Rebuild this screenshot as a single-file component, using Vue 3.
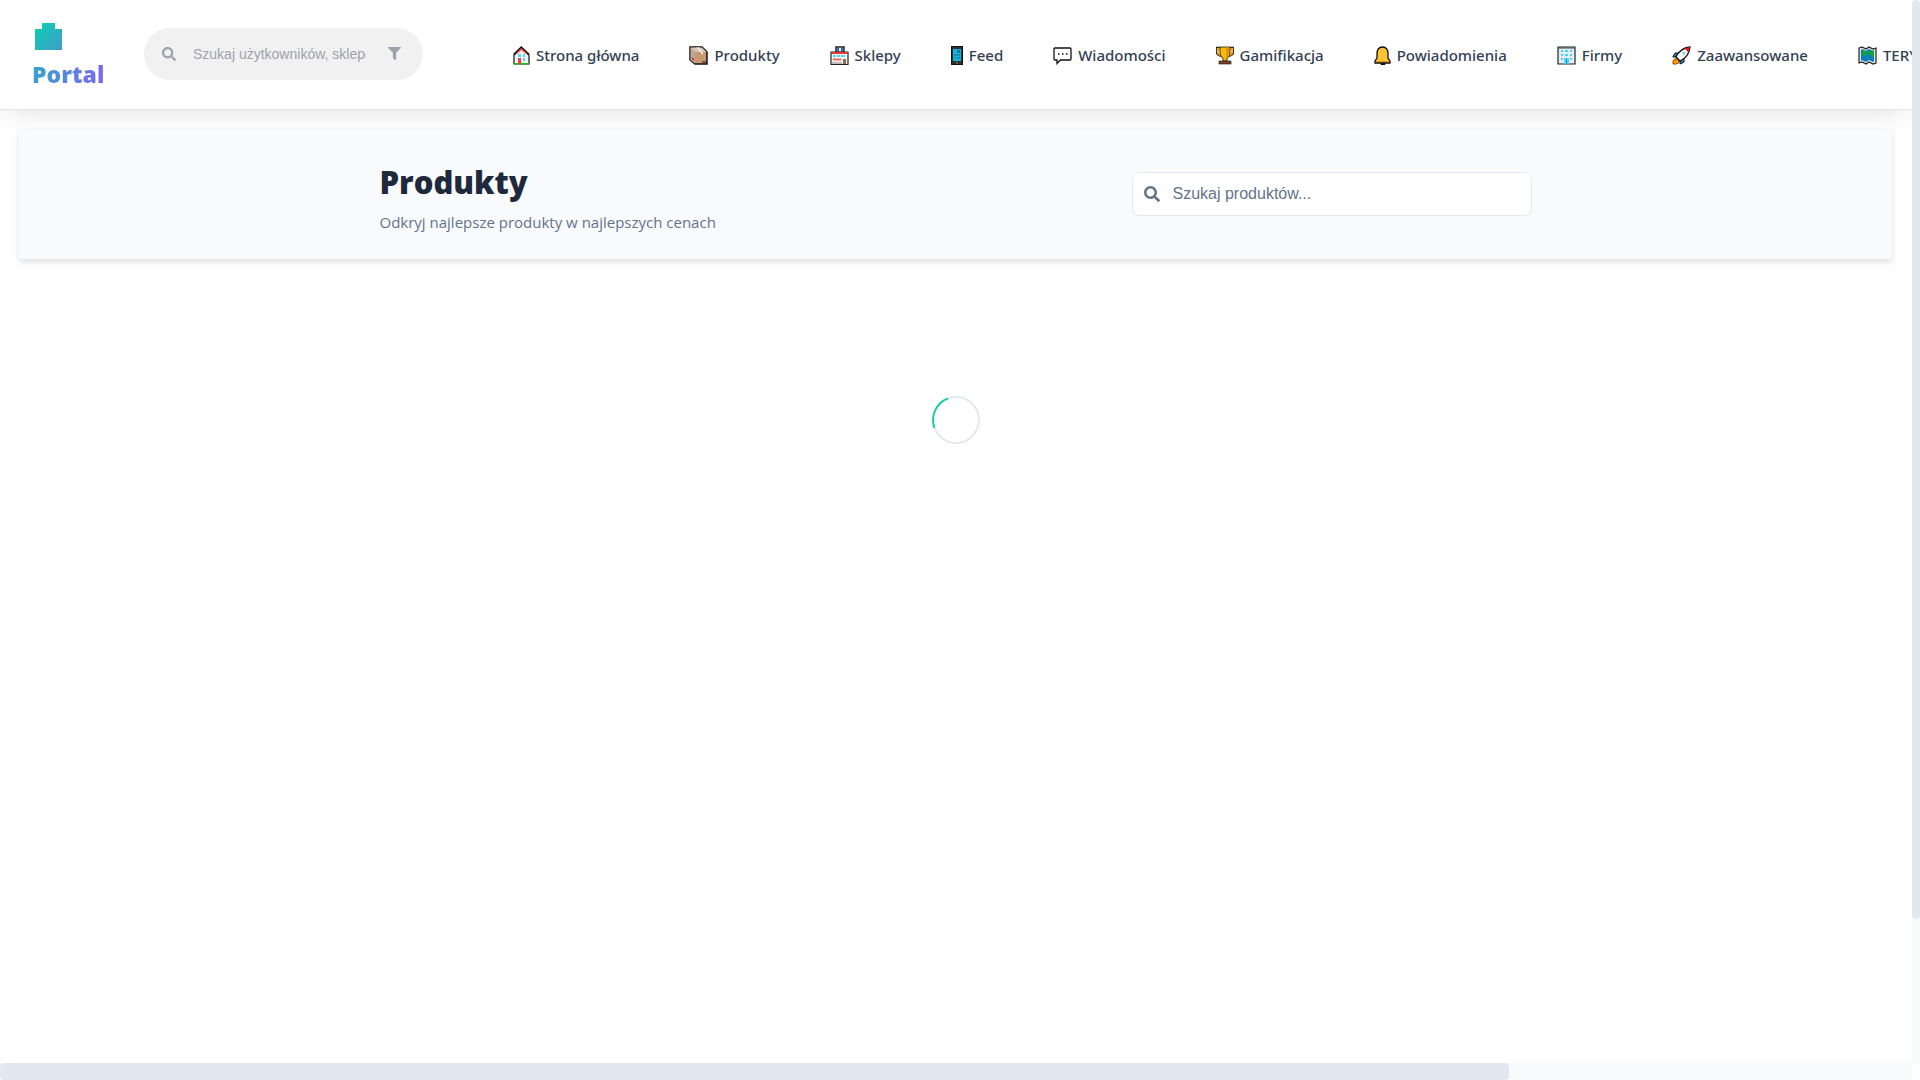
<script setup>
import { ref } from 'vue'

const siteQuery = ref('')
const productQuery = ref('')

const links = [
  { label: 'Strona główna', icon: 'home', width: 17 },
  { label: 'Produkty', icon: 'box', width: 19 },
  { label: 'Sklepy', icon: 'store', width: 19 },
  { label: 'Feed', icon: 'phone', width: 12 },
  { label: 'Wiadomości', icon: 'chat', width: 19 },
  { label: 'Gamifikacja', icon: 'trophy', width: 18 },
  { label: 'Powiadomienia', icon: 'bell', width: 17 },
  { label: 'Firmy', icon: 'office', width: 19 },
  { label: 'Zaawansowane', icon: 'rocket', width: 19 },
  { label: 'TERYT', icon: 'map', width: 19 },
]
</script>

<template>
  <div class="window">
    <div class="page">
      <header class="topbar">
        <a class="logo" href="#">
          <svg class="logo-mark" viewBox="0 0 27 27" aria-hidden="true">
            <defs>
              <linearGradient id="mark" x1="0" y1="0" x2="1" y2="1">
                <stop offset="0.2" stop-color="#16c5b5" />
                <stop offset="1" stop-color="#3f9dcf" />
              </linearGradient>
            </defs>
            <path d="M7 0h13v6h7v21H0V6h7z" fill="url(#mark)" />
          </svg>
          <span class="logo-text">Portal</span>
        </a>

        <form class="site-search" role="search" @submit.prevent>
          <svg class="site-search-icon" viewBox="0 0 512 512" aria-hidden="true">
            <path fill="currentColor" d="M505 442.700L405.300 343c-4.500-4.500-10.600-7-17-7H372c27.600-35.300 44-79.700 44-128C416 93.100 322.900 0 208 0S0 93.100 0 208s93.100 208 208 208c48.300 0 92.700-16.400 128-44v16.300c0 6.400 2.500 12.500 7 17l99.700 99.700c9.400 9.400 24.600 9.400 33.900 0l28.300-28.300c9.400-9.400 9.400-24.600.1-34zM208 336c-70.700 0-128-57.200-128-128 0-70.700 57.200-128 128-128 70.700 0 128 57.200 128 128 0 70.700-57.200 128-128 128z" />
          </svg>
          <input v-model="siteQuery" type="text" aria-label="Szukaj" placeholder="Szukaj użytkowników, sklepów, produktów..." />
          <button class="filter" type="button" aria-label="Filtry">
            <svg viewBox="0 0 512 512" aria-hidden="true">
              <path fill="currentColor" d="M488 0H24C2.700 0-8 25.900 7.100 41L192 226v206c0 7.800 3.800 15.200 10.200 19.700l80 56C298 518.700 320 507.500 320 488V226L505 41C520 25.900 509.300 0 488 0z" />
            </svg>
          </button>
        </form>

        <nav class="menu">
          <a v-for="link in links" :key="link.label" class="menu-link" href="#">
            <svg class="emoji" :width="link.width" height="19" :viewBox="`0 0 ${link.width} 19`" aria-hidden="true">
              <g v-if="link.icon === 'home'">
                <path d="M1 18V9l7-7.500L16 9v9z" fill="#f5f5f5" stroke="#111" stroke-width="1.200" />
                <path d="M1 8.500l7.300-7 7.500 7" fill="none" stroke="#111" stroke-width="2" />
                <path d="M3 8l5.300-5L14 8" fill="none" stroke="#f04a3a" stroke-width="1.500" />
                <path d="M5 8h3v3H5zM10 8h2v3h-2zM10 12h2v3h-2z" fill="#50d8fa" />
                <path d="M5 12h3v6H5z" fill="#e8403a" />
                <path d="M1 17h4v1.500H1zM8 17h8v1.500H8z" fill="#16c60c" />
              </g>
              <g v-else-if="link.icon === 'box'">
                <path d="M1 1h12l5 5v12H6l-5-4z" fill="#c69a70" stroke="#111" stroke-width="1.500" />
                <path d="M1.500 1.500L6 6v11.500l-4.500-3.500z" fill="#b8aaa0" />
                <path d="M1.500 1.500H13L17.500 6H6z" fill="#dcc4ae" />
                <path d="M7 1.500h3L14 6v3l-2-2z" fill="#e7e7e7" />
                <path d="M3 11l2 2v2l-2-2z" fill="#e81224" />
                <path d="M13 15h4v2h-4z" fill="#725843" />
              </g>
              <g v-else-if="link.icon === 'store'">
                <path d="M1 6h17v12.500H1z" fill="#f4f4f4" stroke="#222" stroke-width="1.200" />
                <path d="M6 1h8v5H6z" fill="#e9f1ff" stroke="#222" stroke-width="1.500" />
                <path d="M7 2h2v3H7zM11 2h2v3h-2z" fill="#3067d8" />
                <path d="M1.500 6h16v2h-16z" fill="#e83832" />
                <path d="M3 9h3v2H3zM7 9h3v2H7zM11 9h4v2h-4z" fill="#50d8fa" />
                <path d="M3 12.500h8v2H3z" fill="#ef6959" />
                <path d="M2 16h10v2H2z" fill="#bbb" />
                <path d="M13 13h3v5h-3z" fill="#9b6b4a" />
              </g>
              <g v-else-if="link.icon === 'phone'">
                <rect x="0.500" y="0.500" width="11" height="18" fill="#303030" stroke="#111" />
                <path d="M2 3h8v12H2z" fill="#16b5df" />
                <path d="M6 4h3v3H6z" fill="#087da2" />
                <path d="M3 9h6M3 12h2M6 12h3" stroke="#086c8b" />
                <path d="M5 17h2" stroke="#888" />
              </g>
              <g v-else-if="link.icon === 'chat'">
                <path d="M2 2h15q1 0 1 1v10q0 1-1 1H7.500L4 17.500V14H2q-1 0-1-1V3q0-1 1-1z" fill="#fff" stroke="#111" stroke-width="1.300" />
                <path d="M5 8h1.500M9 8h1.500M13 8h1.500" stroke="#111" stroke-width="1.500" />
              </g>
              <g v-else-if="link.icon === 'trophy'">
                <path d="M4 2H1v4q0 3 5 4M14 2h3v4q0 3-5 4" fill="none" stroke="#111" stroke-width="2.500" />
                <path d="M4 2.500H1.500V6q0 3 5 4M14 2.500h2.500V6q0 3-5 4" fill="none" stroke="#ffb000" stroke-width="1.500" />
                <path d="M4 1h10v6q0 4-3 5v3H7v-3Q4 11 4 7z" fill="#ffb900" stroke="#111" stroke-width="0.800" />
                <path d="M10 1.500h3V7q0 3-3 4z" fill="#e89300" />
                <path d="M3 15h12v3H3z" fill="#7a4425" stroke="#111" stroke-width="0.600" />
              </g>
              <g v-else-if="link.icon === 'bell'">
                <path d="M7 17h4v1.500H7z" fill="#8e562e" stroke="#111" />
                <path d="M8.500 1q5.500 0 5.500 7v4l2 3v2H1v-2l2-3V8q0-7 5.500-7z" fill="#ffc336" stroke="#111" stroke-width="1.300" />
                <path d="M2 15.500h13" stroke="#e19621" />
              </g>
              <g v-else-if="link.icon === 'office'">
                <path d="M1 1h17v17H1z" fill="#e6edf0" stroke="#222" stroke-width="1.200" />
                <path d="M1.500 2h16" stroke="#26495d" />
                <path d="M4 4h2v2H4zM8 4h3v2H8zM13 4h2v2h-2zM4 8h2v2H4zM8 8h3v2H8zM13 8h2v2h-2zM4 12h2v2H4zM13 12h2v2h-2z" fill="#50d0f8" />
                <path d="M7 12h5v6H7z" fill="#50d8fa" />
                <path d="M9.500 13v5" stroke="#2389b2" />
              </g>
              <g v-else-if="link.icon === 'rocket'">
                <path d="M6 7H3L.800 11h4zM12 13v3l-4 2v-4z" fill="#1687c9" stroke="#111" />
                <path d="M1 18v-3q1-3 4-2l2 2q0 3-3 3z" fill="#ff9d00" stroke="#a84709" />
                <path d="M4 11q4-9 14-10-1 10-10 14z" fill="#f5f5f5" stroke="#111" stroke-width="1.300" />
                <path d="M12.500 2.500L18 1l-1.500 5.500z" fill="#e81224" />
                <circle cx="12" cy="7" r="1.500" fill="#8ecbe9" />
              </g>
              <g v-else>
                <path d="M1 2l3-1 4 2 3-2 4 2 3-1v15l-3 1-4-2-3 2-4-2-3 1z" fill="#e6e6e6" stroke="#222" stroke-width="1.200" />
                <path d="M3 4l1-1 4 2 3-2 4 2 1-1v11l-1 1-4-2-3 2-4-2-1 1z" fill="#0877d8" />
                <path d="M4 4l5 1v4l-3 2-2-3zM11 4l5 1v5l-2 2-2-3-2-1zM8 11l3 1-2 3z" fill="#13a53a" />
              </g>
            </svg>
            <span>{{ link.label }}</span>
          </a>
        </nav>
      </header>

      <main>
        <section class="hero">
          <div class="hero-inner">
            <div class="intro">
              <h1>Produkty</h1>
              <p>Odkryj najlepsze produkty w najlepszych cenach</p>
            </div>
            <label class="product-search">
              <svg viewBox="0 0 512 512" aria-hidden="true">
                <path fill="currentColor" d="M505 442.700L405.300 343c-4.500-4.500-10.600-7-17-7H372c27.600-35.300 44-79.700 44-128C416 93.100 322.900 0 208 0S0 93.100 0 208s93.100 208 208 208c48.300 0 92.700-16.400 128-44v16.300c0 6.400 2.500 12.500 7 17l99.700 99.700c9.400 9.400 24.600 9.400 33.900 0l28.300-28.300c9.400-9.400 9.400-24.600.1-34zM208 336c-70.700 0-128-57.200-128-128 0-70.700 57.200-128 128-128 70.700 0 128 57.200 128 128 0 70.700-57.200 128-128 128z" />
              </svg>
              <input v-model="productQuery" type="text" aria-label="Szukaj produktów" placeholder="Szukaj produktów..." />
            </label>
          </div>
        </section>
        <div class="loading" role="status" aria-label="Ładowanie">
          <div class="spinner"></div>
        </div>
      </main>
    </div>
    <div class="track-y"><div class="thumb-y"></div></div>
    <div class="track-x"><div class="thumb-x"></div></div>
  </div>
</template>

<style>
body {
  margin: 0;
  background: #fff;
}
</style>

<style scoped>
.window {
  display: grid;
  grid-template-columns: minmax(0, 1fr) 8px;
  grid-template-rows: minmax(0, 1fr) 17px;
  height: 100vh;
  font-family: "Open Sans", "Noto Sans", sans-serif;
  color: #1e293b;
}
.page {
  overflow: hidden;
}
.track-y,
.track-x {
  background: #f8fafc;
}
.thumb-y,
.thumb-x {
  background: #e2e8f0;
  border-radius: 4px;
}
.thumb-y {
  height: 86.5%;
}
.thumb-x {
  width: 78.9%;
  height: 100%;
}
.topbar {
  display: flex;
  align-items: center;
  box-sizing: border-box;
  height: 110px;
  padding: 0 32px 2px;
  border-bottom: 1px solid #e2e4e8;
  box-shadow: 0 8px 28px -8px rgba(0, 0, 0, 0.14);
}
.logo {
  display: flex;
  flex: none;
  flex-direction: column;
  gap: 8px;
  width: 112px;
  padding-top: 6px;
  text-decoration: none;
}
.logo-mark {
  width: 27px;
  height: 27px;
  margin-left: 3px;
}
.logo-text {
  align-self: flex-start;
  font-size: 23px;
  font-weight: 800;
  line-height: 32px;
  color: transparent;
  background: linear-gradient(110deg, #32a8c8, #8064f2);
  background-clip: text;
}
.site-search {
  display: flex;
  flex: none;
  align-items: center;
  box-sizing: border-box;
  width: 279px;
  height: 52px;
  padding: 0 16px 0 18px;
  background: #f1f1f1;
  border-radius: 26px;
  color: #9ca3af;
}
.site-search-icon {
  flex: none;
  width: 14px;
  height: 14px;
}
input {
  border: 0;
  padding: 0;
  outline: 0;
  background: transparent;
  font-family: "Liberation Sans", Arial, sans-serif;
}
.site-search input {
  flex: none;
  width: 173px;
  margin-left: 17px;
  font-size: 14px;
  color: #9ca3af;
}
input::placeholder {
  color: inherit;
  opacity: 1;
}
.filter {
  display: flex;
  padding: 0;
  margin-left: 22px;
  border: 0;
  background: transparent;
  color: inherit;
}
.filter svg {
  width: 13px;
  height: 13px;
}
.menu {
  display: flex;
  flex: none;
  gap: 50px;
  margin-left: 90px;
  padding-top: 2px;
}
.menu-link {
  display: flex;
  flex: none;
  align-items: center;
  gap: 6px;
  font-family: "Noto Sans", "Open Sans", sans-serif;
  font-size: 15px;
  font-weight: 500;
  line-height: 24px;
  white-space: nowrap;
  color: #334155;
  text-decoration: none;
}
.emoji {
  flex: none;
  margin-top: 2px;
}
.hero {
  box-sizing: border-box;
  margin: 20px 20px 0 19px;
  padding: 31px 24px 33px;
  border-bottom: 1px solid #e2e8f0;
  border-radius: 4px 4px 0 0;
  background: #f8fafc;
  box-shadow: 0 2px 6px rgba(0, 0, 0, 0.12);
}
.hero-inner {
  display: flex;
  align-items: center;
  justify-content: space-between;
  max-width: 1152px;
  height: 65px;
  margin: 0 auto;
}
.intro {
  padding-top: 8px;
}
h1 {
  margin: 0;
  font-size: 31px;
  font-weight: 800;
  line-height: 40px;
}
p {
  margin: 8px 0 0;
  font-size: 15px;
  line-height: 24px;
  color: #64748b;
}
.product-search {
  display: flex;
  align-items: center;
  box-sizing: border-box;
  width: 400px;
  height: 44px;
  padding: 0 11px;
  gap: 13px;
  border: 1px solid #e2e8f0;
  border-radius: 8px;
  background: #fff;
  color: #64748b;
}
.product-search svg {
  flex: none;
  width: 16px;
  height: 16px;
}
.product-search input {
  flex: 1;
  font-size: 16px;
  color: #64748b;
}
.loading {
  display: flex;
  justify-content: center;
  padding: 136px 0;
}
.spinner {
  box-sizing: border-box;
  width: 48px;
  height: 48px;
  border: 2px solid #e2e8f0;
  border-left-color: #10cfa8;
  border-radius: 50%;
  transform: rotate(25deg);
}
</style>
